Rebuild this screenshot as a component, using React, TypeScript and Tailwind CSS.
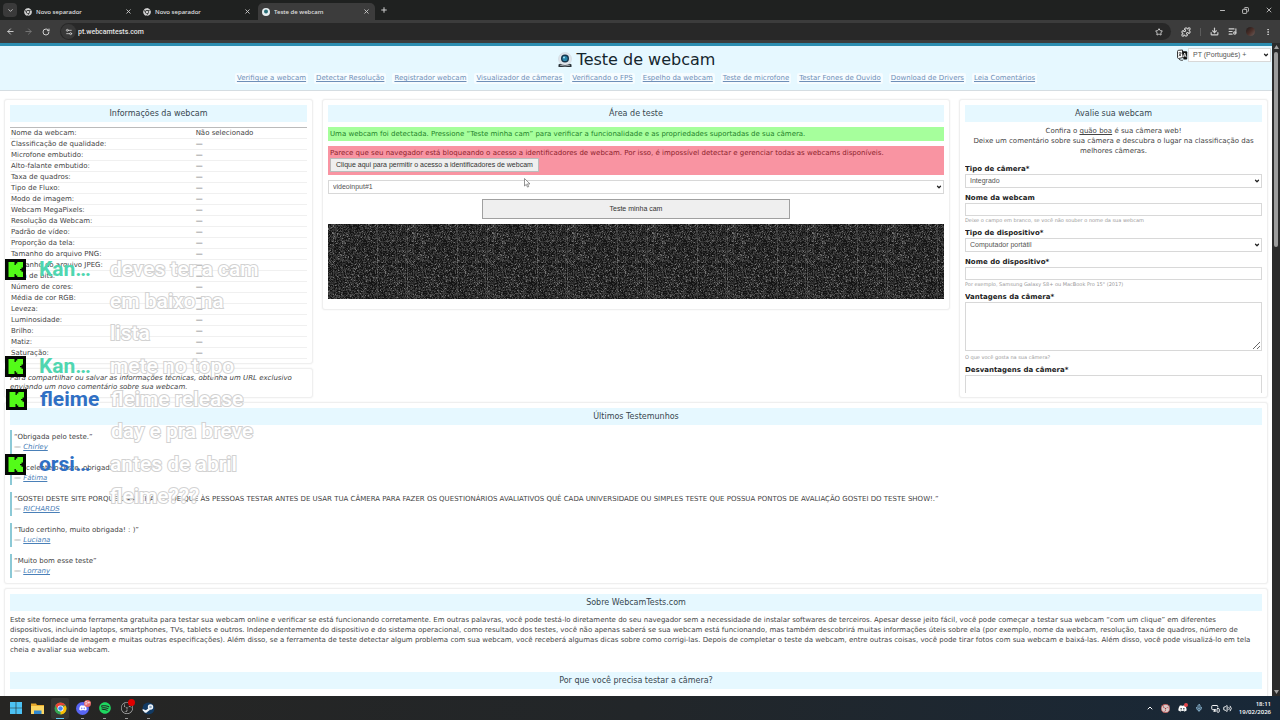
import React from "react";
import {
  ArrowLeft,
  ArrowRight,
  ChevronDown,
  ChevronUp,
  Download,
  EllipsisVertical,
  ListMusic,
  Mic,
  Minus,
  MonitorSmartphone,
  Plus,
  Puzzle,
  RotateCw,
  Settings2,
  Star,
  Volume2,
  X,
  Copy,
} from "lucide-react";
import { FaChrome, FaDiscord, FaSpotify, FaSteam } from "react-icons/fa";
import { SiObsstudio } from "react-icons/si";

const navLinks = [
  "Verifique a webcam",
  "Detectar Resolução",
  "Registrador webcam",
  "Visualizador de câmeras",
  "Verificando o FPS",
  "Espelho da webcam",
  "Teste de microfone",
  "Testar Fones de Ouvido",
  "Download de Drivers",
  "Leia Comentários",
];

const infoRows = [
  "Nome da webcam:",
  "Classificação de qualidade:",
  "Microfone embutido:",
  "Alto-falante embutido:",
  "Taxa de quadros:",
  "Tipo de Fluxo:",
  "Modo de imagem:",
  "Webcam MegaPixels:",
  "Resolução da Webcam:",
  "Padrão de vídeo:",
  "Proporção da tela:",
  "Tamanho do arquivo PNG:",
  "Tamanho do arquivo JPEG:",
  "Taxa de bits:",
  "Número de cores:",
  "Média de cor RGB:",
  "Leveza:",
  "Luminosidade:",
  "Brilho:",
  "Matiz:",
  "Saturação:",
];

const testimonials = [
  { text: "“Obrigada pelo teste.”", author: "Chirley" },
  { text: "“Excelente o teste, obrigada”", author: "Fátima" },
  {
    text: "“GOSTEI DESTE SITE PORQUE DÁ A CHANCE DE QUE ÀS PESSOAS TESTAR ANTES DE USAR TUA CÂMERA PARA FAZER OS QUESTIONÁRIOS AVALIATIVOS QUÊ CADA UNIVERSIDADE OU SIMPLES TESTE QUE POSSUA PONTOS DE AVALIAÇÃO GOSTEI DO TESTE SHOW!.”",
    author: "RICHARDS",
  },
  { text: "“Tudo certinho, muito obrigada! : )”", author: "Luciana" },
  { text: "“Muito bom esse teste”", author: "Lorrany" },
];

const aboutLines = [
  "Este site fornece uma ferramenta gratuita para testar sua webcam online e verificar se está funcionando corretamente. Em outras palavras, você pode testá-lo diretamente do seu navegador sem a necessidade de instalar softwares de terceiros. Apesar desse jeito fácil, você pode começar a testar sua webcam “com um clique” em diferentes",
  "dispositivos, incluindo laptops, smartphones, TVs, tablets e outros. Independentemente do dispositivo e do sistema operacional, como resultado dos testes, você não apenas saberá se sua webcam está funcionando, mas também descobrirá muitas informações úteis sobre ela (por exemplo, nome da webcam, resolução, taxa de quadros, número de",
  "cores, qualidade de imagem e muitas outras especificações). Além disso, se a ferramenta de teste detectar algum problema com sua webcam, você receberá algumas dicas sobre como corrigi-las. Depois de completar o teste da webcam, entre outras coisas, você pode tirar fotos com sua webcam e baixá-las. Além disso, você pode visualizá-lo em tela",
  "cheia e avaliar sua webcam.",
];

const TILE = 80;
const TILE_HEIGHT = 75;
const shades = ["#292929", "#3a3a3a", "#505050", "#747474"];

function buildNoise(): string[] {
  const paths = shades.map(() => "");
  const strongStreaks = [49, 79];
  const softStreaks = [5, 14, 69, 77];
  let seed = 20263;
  for (let y = 0; y < TILE_HEIGHT; y++) {
    for (let x = 0; x < TILE; x++) {
      seed = (seed * 48271) % 2147483647;
      let r = seed / 2147483647;
      if (strongStreaks.includes(x)) r = r * 0.3 + 0.7;
      else if (softStreaks.includes(x)) r = r * 0.65 + 0.35;
      let level = -1;
      if (r > 0.97) level = 3;
      else if (r > 0.86) level = 2;
      else if (r > 0.62) level = 1;
      else if (r > 0.35) level = 0;
      if (level >= 0) paths[level] += `M${x} ${y}h1v1h-1z`;
    }
  }
  return paths;
}

const noisePaths = buildNoise();

function StaticNoise() {
  return (
    <svg className="mt-[5px] block h-[75px] w-full bg-[#141414]" aria-hidden="true">
      <defs>
        <pattern id="noise" width={TILE} height={TILE_HEIGHT} patternUnits="userSpaceOnUse">
          {noisePaths.map((d, i) => (
            <path key={shades[i]} d={d} fill={shades[i]} />
          ))}
        </pattern>
      </defs>
      <rect width="100%" height="100%" fill="url(#noise)" />
    </svg>
  );
}

function Tab({ title, active, children }: { title: string; active?: boolean; children: React.ReactNode }) {
  return (
    <div
      className={
        active
          ? "flex h-[17px] w-[117px] items-center self-end rounded-t-[5px] bg-[#3c3c3c] pr-[5px] pl-1"
          : "flex h-[17px] w-[119px] items-center self-end pr-[7px] pl-1"
      }
    >
      {children}
      <span className="ml-1 flex-1 truncate text-[6px] font-medium leading-[10px] text-[#e0e0e0]">{title}</span>
      <button aria-label="Fechar separador" className="text-[#d0d0d0]">
        <X size={7} strokeWidth={3} />
      </button>
    </div>
  );
}

function Card({ className = "p-[5px]", children }: { className?: string; children: React.ReactNode }) {
  return (
    <section className={`rounded-[3px] border border-[#efefef] bg-white shadow-[0_0_2px_#eeeeee] ${className}`}>
      {children}
    </section>
  );
}

function Heading({ children }: { children: React.ReactNode }) {
  return <h2 className="bg-[#e6f8ff] text-center text-[8px] leading-[17px] text-[#37474f]">{children}</h2>;
}

function Select({ id, label, options }: { id: string; label?: string; options: string[] }) {
  return (
    <div className="relative">
      <select
        id={id}
        aria-label={label}
        className="block h-[14px] w-full appearance-none border border-[#d8d8d8] bg-white pl-1 font-['Liberation_Sans',sans-serif] text-[7px] leading-[10px] text-[#555]"
      >
        {options.map((o) => (
          <option key={o}>{o}</option>
        ))}
      </select>
      <ChevronDown size={6} strokeWidth={5} className="pointer-events-none absolute top-1 right-[2px] text-[#222]" />
    </div>
  );
}

function FieldLabel({ htmlFor, children }: { htmlFor: string; children: React.ReactNode }) {
  return (
    <label htmlFor={htmlFor} className="block text-[7px] font-bold leading-[10px] text-[#222]">
      {children}
    </label>
  );
}

function Hint({ children }: { children: React.ReactNode }) {
  return <p className="text-[5px] leading-[8px] text-[#999]">{children}</p>;
}

function WebcamLogo() {
  return (
    <svg width="16" height="16" viewBox="0 0 16 16" aria-hidden="true">
      <circle cx="8" cy="7" r="6.5" fill="#dfe4ea" stroke="#c9d0d8" strokeWidth=".5" />
      <path d="M1.500 12.500l1.500-.800q5 2.400 10 0l1.500.800v2.500h-13z" fill="#2a3238" />
      <path d="M3 13.200q5 1.600 10 0" stroke="#c9d0d8" strokeWidth=".7" fill="none" />
      <circle cx="8" cy="6.500" r="4" fill="#17364d" />
      <circle cx="8" cy="6.500" r="2.600" fill="#2a86ab" />
      <circle cx="7" cy="5.500" r="1" fill="#a7e3f5" />
    </svg>
  );
}

function TranslateIcon() {
  return (
    <svg width="12" height="12" viewBox="0 0 12 12" aria-hidden="true">
      <path d="M1.500 2.500q0-1.200 1.200-1.200L6.500 1l.6 7.500-4.400 1q-1.200 0-1.200-1.200z" fill="#fff" stroke="#222" strokeWidth=".9" />
      <path d="M2.600 4h3M4 3v1M5 4.200Q4.400 6.500 2.600 7M3.200 5.200L5 7" stroke="#222" strokeWidth=".7" fill="none" />
      <path d="M6 2.200h4.200q1 0 1 1v6.300q0 1-1 1H7.500z" fill="#111" />
      <path d="M7.200 8.200L8.700 4l1.500 4.200M7.700 6.900h2" stroke="#fff" strokeWidth=".8" fill="none" />
      <path d="M3 10.300q2 1.500 4 .9" stroke="#222" strokeWidth=".8" fill="none" />
    </svg>
  );
}

function KickBadge() {
  return (
    <svg width="21" height="21" viewBox="0 0 21 21" className="shrink-0" aria-hidden="true">
      <rect width="21" height="21" fill="#050805" />
      <path
        d="M3.500 3h6v3h1.300V4.500h1.500V3H18v5.500h-1.500V10H15v1.300h1.500v1.400H18V18h-5.700v-1.500h-1.500V15H9.500v3h-6z"
        fill="#53fc18"
      />
    </svg>
  );
}

const chatRows = [
  { name: "Kan…", color: "text-[#4fd6b0]", lines: ["deves ter a cam", "em baixo na", "lista"], place: "top-[253px] left-[5px]" },
  { name: "Kan…", color: "text-[#4fd6b0]", lines: ["mete no topo"], place: "top-[350px] left-[5px]" },
  { name: "fleime", color: "text-[#2f6fc4]", lines: ["fleime release", "day e pra breve"], place: "top-[383px] left-[6px]" },
  { name: "orsi…", color: "text-[#2f6fc4]", lines: ["antes de abril", "fleime???"], place: "top-[448px] left-[5px]" },
];

function ChatOverlay() {
  return (
    <div className="pointer-events-none font-['Roboto',sans-serif] text-[21px] leading-8">
      {chatRows.map((row) => (
        <div key={row.place} className={`absolute flex ${row.place}`}>
          <div className="flex h-8 w-[105px] items-center">
            <KickBadge />
            <span className={`ml-[13px] font-bold ${row.color}`}>{row.name}</span>
          </div>
          <div className="font-medium text-white [-webkit-text-stroke:2px_#d2d2d2] [paint-order:stroke_fill]">
            {row.lines.map((l) => (
              <p key={l}>{l}</p>
            ))}
          </div>
        </div>
      ))}
    </div>
  );
}

function ChromeIcon({ size }: { size: number }) {
  return (
    <svg width={size} height={size} viewBox="0 0 24 24" aria-hidden="true">
      <circle cx="12" cy="12" r="11" fill="#34a853" />
      <path d="M12 12L21.500 6.500A11 11 0 0 1 12 23z" fill="#fbbc04" />
      <path d="M12 6.500h9.500A11 11 0 0 0 2.500 6.500L7.300 14.700z" fill="#ea4335" />
      <circle cx="12" cy="12" r="5.500" fill="#fff" />
      <circle cx="12" cy="12" r="4.200" fill="#4285f4" />
    </svg>
  );
}

function BrowserChrome() {
  return (
    <header className="shrink-0 bg-[#1f2120] font-['Noto_Sans',sans-serif] text-[#d0d0d0]">
      <div className="flex h-5 items-center pr-[7px]">
        <button aria-label="Procurar separadores" className="mr-[3px] ml-[3px] flex size-[14px] items-center justify-center rounded-[4px] bg-[#3a3a3a]">
          <ChevronDown size={7} strokeWidth={3} />
        </button>
        <Tab title="Novo separador">
          <FaChrome size={8} />
        </Tab>
        <Tab title="Novo separador">
          <FaChrome size={8} />
        </Tab>
        <Tab title="Teste de webcam" active>
          <svg width="8" height="8" viewBox="0 0 16 16" aria-hidden="true">
            <circle cx="8" cy="8" r="8" fill="#e8eef0" />
            <circle cx="8" cy="7" r="4" fill="#2b6f78" />
          </svg>
        </Tab>
        <button aria-label="Novo separador" className="ml-[5px]">
          <Plus size={8} strokeWidth={3} />
        </button>
        <div className="ml-auto flex items-center gap-4">
          <button aria-label="Minimizar">
            <Minus size={7} strokeWidth={3} />
          </button>
          <button aria-label="Restaurar">
            <Copy size={7} strokeWidth={3} className="-scale-x-100" />
          </button>
          <button aria-label="Fechar">
            <X size={8} strokeWidth={2.5} />
          </button>
        </div>
      </div>
      <div className="flex h-[23px] items-center bg-[#3c3c3c] pr-2 pl-[6px]">
        <button aria-label="Retroceder">
          <ArrowLeft size={9} strokeWidth={2.5} />
        </button>
        <button aria-label="Avançar" className="ml-[9px] text-[#777]">
          <ArrowRight size={9} strokeWidth={2.5} />
        </button>
        <button aria-label="Atualizar" className="ml-[9px]">
          <RotateCw size={8} strokeWidth={3} />
        </button>
        <div className="ml-[10px] flex h-[17px] flex-1 items-center rounded-full bg-[#282828] pr-2 pl-px">
          <span className="flex size-[15px] items-center justify-center rounded-full bg-[#383838]">
            <Settings2 size={8} strokeWidth={2.5} />
          </span>
          <input
            aria-label="Endereço"
            defaultValue="pt.webcamtests.com"
            className="ml-[2px] flex-1 bg-transparent font-['Roboto',sans-serif] text-[7px] font-medium leading-[10px] text-[#e3e3e3] outline-none"
          />
          <Star size={8} strokeWidth={3} />
        </div>
        <div className="ml-[10px] flex items-center gap-[9px]">
          <Puzzle size={10} strokeWidth={2.5} />
          <span className="h-2 w-px bg-[#5c5c5c]" />
          <Download size={9} strokeWidth={3} />
          <ListMusic size={9} strokeWidth={3} />
          <span className="size-[9px] rounded-full bg-linear-to-br from-[#1d1a1a] via-[#4a2e28] to-[#6a5d5a]" />
          <EllipsisVertical size={8} strokeWidth={3} />
        </div>
      </div>
    </header>
  );
}

function RunningApp({ children }: { children: React.ReactNode }) {
  return (
    <span className="relative flex h-[21px] w-[13px] items-center justify-center">
      {children}
      <span className="absolute bottom-0 left-[5px] h-px w-[3px] bg-[#9a9a9a]" />
    </span>
  );
}

function Taskbar() {
  return (
    <footer className="flex h-6 shrink-0 items-center bg-linear-to-r from-[#262523] via-[#222629] to-[#182838] px-[9px] font-['Open_Sans',sans-serif] text-white">
      <div className="flex items-center gap-[9px]">
        <span className="flex size-[13px] items-center justify-center">
          <svg width="12" height="12" viewBox="0 0 12 12" aria-label="Iniciar">
            <path d="M0 0h5.700v5.700H0zM6.300 0H12v5.700H6.300zM0 6.300h5.700V12H0zM6.300 6.300H12V12H6.300z" fill="#4cc2f5" />
          </svg>
        </span>
        <svg width="13" height="13" viewBox="0 0 13 13" aria-label="Explorador">
          <path d="M0 1.500h5l1 1.500h7v8.500H0z" fill="#e8a92c" />
          <path d="M0 4h13v8H0z" fill="#fcd663" />
          <path d="M3 8.500h7.500V12H3z" fill="#2f87d0" />
        </svg>
        <span className="relative -mx-[2px] flex h-[21px] w-[18px] items-center justify-center rounded-[2px] bg-[#363533]">
          <ChromeIcon size={13} />
          <span className="absolute bottom-0 h-px w-2 bg-[#60c8f0]" />
        </span>
        <RunningApp>
          <span className="flex size-[13px] items-center justify-center rounded-full bg-[#5865f2]">
            <FaDiscord size={8} />
          </span>
          <span className="absolute top-[2px] -right-[2px] size-[7px] rounded-full bg-[#e5686c] text-center text-[5px] leading-[7px]">9+</span>
        </RunningApp>
        <RunningApp>
          <FaSpotify size={12} color="#1ed760" />
        </RunningApp>
        <RunningApp>
          <SiObsstudio size={12} color="#c8c8c8" />
          <span className="absolute top-px -right-[2px] size-[7px] rounded-full bg-[#e00000]" />
        </RunningApp>
        <RunningApp>
          <svg width="13" height="13" viewBox="0 0 13 13" aria-label="Steam">
            <circle cx="6.500" cy="6.500" r="6" fill="#123a63" />
            <circle cx="8.500" cy="5" r="2.700" fill="#f2f6fa" />
            <circle cx="8.500" cy="5" r="1.300" fill="#8fa9c4" />
            <path d="M.6 7l3.300 1.300 2.600-2 1.600 1.500-2.600 2A1.900 1.900 0 0 1 2 9.400L.8 8.800z" fill="#f2f6fa" />
          </svg>
        </RunningApp>
      </div>
      <div className="ml-auto flex items-center">
        <ChevronUp size={8} strokeWidth={3} />
        <span className="ml-[7px] flex size-[9px] items-center justify-center rounded-full bg-[#d8c8c8]">
          <SiObsstudio size={9} color="#a01818" />
        </span>
        <span className="relative ml-2">
          <FaDiscord size={9} />
          <span className="absolute -top-px -right-px size-1 rounded-full bg-[#e5484d]" />
        </span>
        <Mic size={8} strokeWidth={2.5} className="ml-2 text-[#9fd0ee]" />
        <MonitorSmartphone size={9} strokeWidth={2.5} className="ml-2" />
        <Volume2 size={9} strokeWidth={2.5} className="ml-[3px]" />
        <p className="ml-[7px] text-right text-[6px] font-semibold leading-[8px]">
          18:11
          <br />
          19/02/2026
        </p>
      </div>
    </footer>
  );
}

function InfoColumn() {
  return (
    <div className="flex flex-col gap-1">
      <Card className="px-[5px] pt-[5px] pb-1">
        <Heading>Informações da webcam</Heading>
        <table className="mt-[5px] w-full border-t border-[#bbb] text-[7px] leading-[10px] text-[#444]">
          <tbody>
            {infoRows.map((row, i) => (
              <tr key={row} className="h-[11px] border-b border-[#f0f0f0]">
                <th scope="row" className="w-5/8 p-0 pl-px text-left font-normal">
                  {row}
                </th>
                <td className="p-0">{i === 0 ? "Não selecionado" : "—"}</td>
              </tr>
            ))}
          </tbody>
        </table>
      </Card>
      <Card className="p-[5px] text-[7px] leading-[9px] text-[#444]">
        <p className="italic">Para compartilhar ou salvar as informações técnicas, obtenha um URL exclusivo enviando um novo comentário sobre sua webcam.</p>
      </Card>
    </div>
  );
}

function TestArea() {
  return (
    <Card className="self-start px-[5px] pt-[5px] pb-[10px]">
      <Heading>Área de teste</Heading>
      <p className="mt-[5px] bg-[#a6ff9c] px-[2px] text-[7px] leading-[14px] text-[#23822a]">
        Uma webcam foi detectada. Pressione “Teste minha cam” para verificar a funcionalidade e as propriedades suportadas de sua câmera.
      </p>
      <div className="mt-[5px] bg-[#f994a2] px-[2px] pt-[3px] pb-[3px] text-[7px] leading-[9px] text-[#8c1f2c]">
        <p>
          Parece que seu navegador está bloqueando o acesso a identificadores de webcam. Por isso, é impossível detectar e gerenciar todas as webcams disponíveis.
        </p>
        <button className="block h-[14px] border border-[#bbb] bg-[#efefef] px-[5px] font-['Liberation_Sans',sans-serif] text-[7px] leading-[10px] text-[#333]">
          Clique aqui para permitir o acesso a identificadores de webcam
        </button>
      </div>
      <div className="mt-[5px]">
        <Select id="device" label="Dispositivo de vídeo" options={["videoinput#1"]} />
      </div>
      <button className="mx-auto mt-[5px] block h-5 w-1/2 border border-[#a0a0a0] bg-[#efefef] font-['Liberation_Sans',sans-serif] text-[7px] leading-[10px] text-[#333]">
        Teste minha cam
      </button>
      <StaticNoise />
    </Card>
  );
}

function ReviewForm() {
  return (
    <Card className="h-[299px] overflow-hidden p-[5px]">
      <Heading>Avalie sua webcam</Heading>
      <form className="h-[271px] overflow-hidden pt-1">
        <p className="text-center text-[7px] leading-[10px] text-[#444]">
          Confira o{" "}
          <a href="#reviews" className="underline">
            quão boa
          </a>{" "}
          é sua câmera web!
          <br />
          Deixe um comentário sobre sua câmera e descubra o lugar na classificação das melhores câmeras.
        </p>
        <div className="mt-2">
          <FieldLabel htmlFor="camera-type">Tipo de câmera*</FieldLabel>
          <Select id="camera-type" options={["Integrado"]} />
        </div>
        <div className="mt-[5px]">
          <FieldLabel htmlFor="camera-name">Nome da webcam</FieldLabel>
          <input id="camera-name" className="block h-[13px] w-full border border-[#d8d8d8] px-1 text-[7px]" />
          <Hint>Deixe o campo em branco, se você não souber o nome da sua webcam</Hint>
        </div>
        <div className="mt-1">
          <FieldLabel htmlFor="device-type">Tipo de dispositivo*</FieldLabel>
          <Select id="device-type" options={["Computador portátil"]} />
        </div>
        <div className="mt-[5px]">
          <FieldLabel htmlFor="device-name">Nome do dispositivo*</FieldLabel>
          <input id="device-name" className="block h-[13px] w-full border border-[#d8d8d8] px-1 text-[7px]" />
          <Hint>Por exemplo, Samsung Galaxy S8+ ou MacBook Pro 15" (2017)</Hint>
        </div>
        <div className="mt-1">
          <FieldLabel htmlFor="pros">Vantagens da câmera*</FieldLabel>
          <textarea id="pros" className="mb-[2px] block h-[49px] w-full border border-[#d8d8d8] px-1 text-[7px]" />
          <Hint>O que você gosta na sua câmera?</Hint>
        </div>
        <div className="mt-1">
          <FieldLabel htmlFor="cons">Desvantagens da câmera*</FieldLabel>
          <textarea id="cons" className="block h-[49px] w-full border border-[#d8d8d8] px-1 text-[7px]" />
        </div>
      </form>
    </Card>
  );
}

export default function App() {
  return (
    <div className="relative flex h-screen flex-col overflow-hidden bg-white">
      <BrowserChrome />
      <div className="flex min-h-0 flex-1">
        <main className="min-w-0 flex-1 overflow-hidden font-['DejaVu_Sans',sans-serif]">
          <div className="relative h-12 border-t-[3px] border-b border-t-[#2c8db0] border-b-[#d5dde2] bg-[#e6f8ff]">
            <h1 className="flex h-[27px] items-center justify-center gap-1 text-[16px] leading-5 text-[#15262e]">
              <WebcamLogo />
              Teste de webcam
            </h1>
            <nav className="flex justify-center gap-[6px] text-[7px] leading-[11px]">
              {navLinks.map((l) => (
                <a key={l} href="#nav" className="rounded-[2px] bg-[#f6fcff] px-[2px] whitespace-nowrap text-[#6e8fb8] underline">
                  {l}
                </a>
              ))}
            </nav>
            <div className="absolute top-[2px] right-px flex items-center">
              <TranslateIcon />
              <div className="w-[83px]">
                <Select id="language" label="Idioma" options={["PT (Português) +"]} />
              </div>
            </div>
          </div>
          <div className="grid grid-cols-[309fr_628fr_309fr] gap-[9px] px-1 pt-2">
            <InfoColumn />
            <TestArea />
            <ReviewForm />
          </div>
          <div className="flex flex-col gap-1 px-1 pt-1">
            <Card>
              <Heading>Últimos Testemunhos</Heading>
              <div className="mt-[5px] flex flex-col gap-[7px]">
                {testimonials.map((t) => (
                  <blockquote key={t.author} className="border-l-2 border-[#8cc9d6] py-[2px] pl-[2px] text-[7px] leading-[10px] text-[#444]">
                    <p>{t.text}</p>
                    <cite className="block text-[#777]">
                      —{" "}
                      <a href="#author" className="text-[#4a80b8] underline">
                        {t.author}
                      </a>
                    </cite>
                  </blockquote>
                ))}
              </div>
            </Card>
            <Card>
              <Heading>Sobre WebcamTests.com</Heading>
              <p className="mt-1 mb-[17px] text-[7px] leading-[10px] text-[#444]">
                {aboutLines.map((line) => (
                  <React.Fragment key={line}>
                    {line}
                    <br />
                  </React.Fragment>
                ))}
              </p>
              <Heading>Por que você precisa testar a câmera?</Heading>
              <p className="mt-1 h-6" />
            </Card>
          </div>
        </main>
        <div className="flex w-2 flex-col items-center bg-[#2b2b2b] pt-[2px] pb-[2px]">
          <svg width="5" height="4" viewBox="0 0 5 4" aria-hidden="true">
            <path d="M2.500 0L5 4H0z" fill="#a0a0a0" />
          </svg>
          <div className="mt-[3px] h-[30%] w-1 rounded-full bg-[#9c9c9c]" />
          <svg width="5" height="4" viewBox="0 0 5 4" className="mt-auto" aria-hidden="true">
            <path d="M0 0h5L2.500 4z" fill="#a0a0a0" />
          </svg>
        </div>
      </div>
      <Taskbar />
      <ChatOverlay />
      <svg width="7" height="10" viewBox="0 0 7 10" className="pointer-events-none absolute top-[178px] left-[524px]" aria-hidden="true">
        <path d="M.5.500v7.500l1.800-1.600 1.200 2.700 1.200-.5-1.200-2.700h2.500z" fill="#fff" stroke="#666" strokeWidth=".7" />
      </svg>
    </div>
  );
}
